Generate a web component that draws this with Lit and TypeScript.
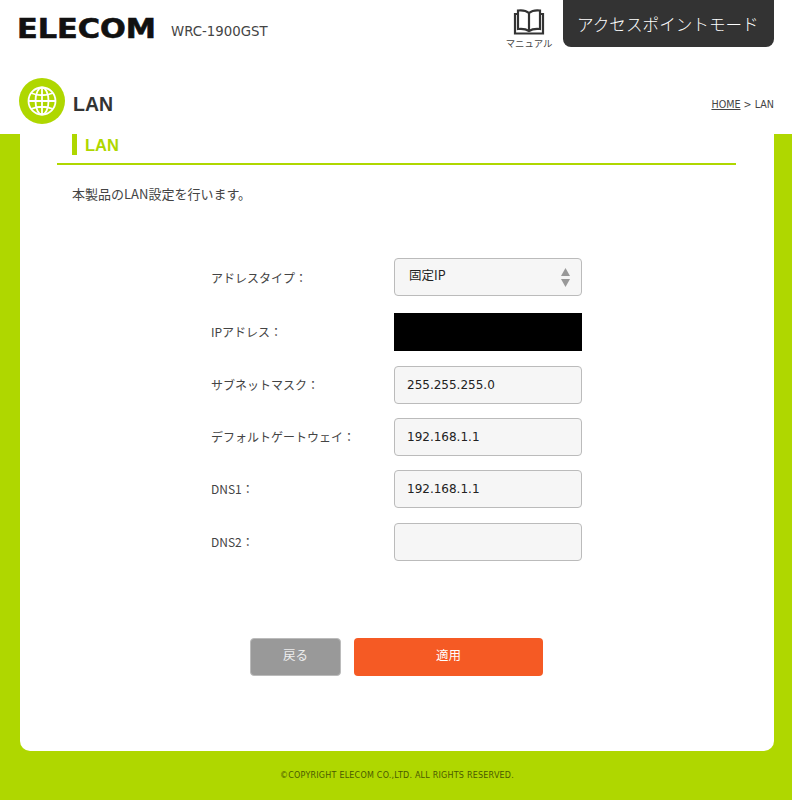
import { LitElement, html, css } from "lit";
import { customElement } from "lit/decorators.js";

@customElement("app-root")
export class AppRoot extends LitElement {
  static styles = css`
    :host { display: block; width: 792px; height: 800px; overflow: hidden; background: #fff; color: #333; font-family: "DejaVu Sans", "Noto Sans CJK JP", sans-serif; font-size: 12px; }
    * { box-sizing: border-box; }
    .top { height: 74px; display: flex; align-items: flex-start; padding-right: 18px; }
    .logo { margin: 15px 0 0 19px; width: 137px; height: 27px; overflow: visible; flex: none; }
    .logo text { font-family: "DejaVu Sans", sans-serif; font-weight: 700; font-size: 26px; fill: #111; stroke: #111; stroke-width: 0.6px; }
    .model { margin: 23px 0 0 15px; font-size: 13.3px; line-height: 18px; color: #444; flex: 1; }
    .manual { margin-top: 9px; width: 46px; display: flex; flex-direction: column; align-items: center; font-size: 9.4px; line-height: 12px; color: #444; margin-right: 11px; white-space: nowrap; font-family: "Noto Sans CJK JP", sans-serif; }
    .manual svg { display: block; margin-bottom: 2px; }
    .mode { width: 211px; height: 47px; background: #333; color: #fff; border-radius: 0 0 8px 8px; font-size: 16.6px; display: flex; align-items: center; padding-left: 14px; white-space: nowrap; font-family: "Noto Sans CJK JP", sans-serif; font-weight: 300; }
    .head { height: 60px; display: flex; align-items: flex-start; padding: 4px 18px 0 19px; }
    .icon { width: 46px; height: 46px; border-radius: 50%; background: #afd700; display: flex; align-items: center; justify-content: center; margin-right: 8px; }
    .head h1 { margin: 14px 0 0; font: 700 19.5px/24px "Liberation Sans", sans-serif; color: #333; flex: 1; }
    .crumb { margin-top: 20px; font-size: 9.6px; line-height: 14px; color: #444; }
    .green { background: #afd700; height: 666px; padding: 0 18px 0 20px; display: flex; flex-direction: column; }
    .card { background: #fff; height: 617px; border-radius: 0 0 10px 10px; padding: 0 38px 0 37px; display: flex; flex-direction: column; }
    .sec { height: 31px; border-bottom: 2px solid #afd700; padding: 0 0 0 15px; display: flex; align-items: flex-start; }
    .sec h2 { margin: 0; height: 21px; border-left: 5px solid #afd700; padding: 1px 0 0 8px; font: 700 16.5px/21px "Liberation Sans", sans-serif; color: #afd700; }
    .desc { margin: 20px 0 0 15px; font-size: 13px; line-height: 18px; color: #444; font-family: "Noto Sans CJK JP", sans-serif; }
    form { display: grid; grid-template-columns: 183px 188px; grid-template-rows: 55px 53px 52px 52px 53px 38px; margin: 55px 0 0 154px; }
    label { display: flex; align-items: center; font-size: 12px; color: #444; height: 38px; padding-bottom: 2px; font-family: "Noto Sans CJK JP", sans-serif; }
    label:first-child { padding-bottom: 0; }
    .f { height: 38px; background: #f6f6f6; border: 1px solid #bbb; border-radius: 4px; display: flex; align-items: center; padding-left: 12px; font-size: 12px; color: #222; }
    .sel { padding: 0 11px 0 14px; justify-content: space-between; font-size: 12.5px; font-family: "Noto Sans CJK JP", sans-serif; }
    .sel span { margin-bottom: 5px; }
    .mask { background: #000; border: 0; border-radius: 0; }
    .btns { display: flex; gap: 13px; margin: 77px 0 0 193px; }
    .btn { height: 38px; border-radius: 4px; color: #fff; display: flex; align-items: center; justify-content: center; padding-bottom: 5px; font-size: 12.5px; font-family: "Noto Sans CJK JP", sans-serif; }
    .back { width: 91px; background: #999; border: 1px solid #bbb; color: #eee; }
    .apply { width: 189px; background: #f55a24; }
    footer { flex: 1; display: flex; align-items: center; justify-content: center; font-size: 8px; color: #4a5a00; letter-spacing: 0.22px; }
  `;

  render() {
    return html`
      <div class="top">
        <svg class="logo" viewBox="0 0 137 27"><text x="-2" y="23" textLength="139" lengthAdjust="spacingAndGlyphs">ELECOM</text></svg>
        <div class="model">WRC-1900GST</div>
        <div class="manual">
          <svg width="32" height="26" viewBox="0 0 32 26" fill="none" stroke="#333" stroke-width="2.2">
            <path d="M16 4C13 1.5 9 1 5 1.5V20C9 19.5 13 20 16 22C19 20 23 19.5 27 20V1.5C23 1 19 1.5 16 4Z"/>
            <path d="M16 4V22"/>
            <path d="M5 5H2V24.5H30V5H27"/>
          </svg>
          <span>マニュアル</span>
        </div>
        <div class="mode">アクセスポイントモード</div>
      </div>
      <div class="head">
        <div class="icon">
          <svg width="30" height="30" viewBox="0 0 30 30" fill="none" stroke="#fff" stroke-width="1.8">
            <circle cx="15" cy="15" r="13.5"/>
            <ellipse cx="15" cy="15" rx="6.5" ry="13.5"/>
            <path d="M15 1.5V28.5M1.5 15H28.5M4 7Q15 11.5 26 7M4 23Q15 18.5 26 23"/>
          </svg>
        </div>
        <h1>LAN</h1>
        <div class="crumb"><u>HOME</u> &gt; LAN</div>
      </div>
      <div class="green">
        <div class="card">
          <div class="sec"><h2>LAN</h2></div>
          <div class="desc">本製品のLAN設定を行います。</div>
          <form>
            <label>アドレスタイプ：</label>
            <div class="f sel"><span>固定IP</span>
              <svg width="9" height="19" viewBox="0 0 9 19" fill="#999"><path d="M4.5 0L9 8H0ZM0 11H9L4.5 19Z"/></svg>
            </div>
            <label>IPアドレス：</label><div class="f mask"></div>
            <label>サブネットマスク：</label><div class="f">255.255.255.0</div>
            <label>デフォルトゲートウェイ：</label><div class="f">192.168.1.1</div>
            <label>DNS1：</label><div class="f">192.168.1.1</div>
            <label>DNS2：</label><div class="f"></div>
          </form>
          <div class="btns">
            <div class="btn back">戻る</div>
            <div class="btn apply">適用</div>
          </div>
        </div>
        <footer>©COPYRIGHT ELECOM CO.,LTD. ALL RIGHTS RESERVED.</footer>
      </div>
    `;
  }
}
